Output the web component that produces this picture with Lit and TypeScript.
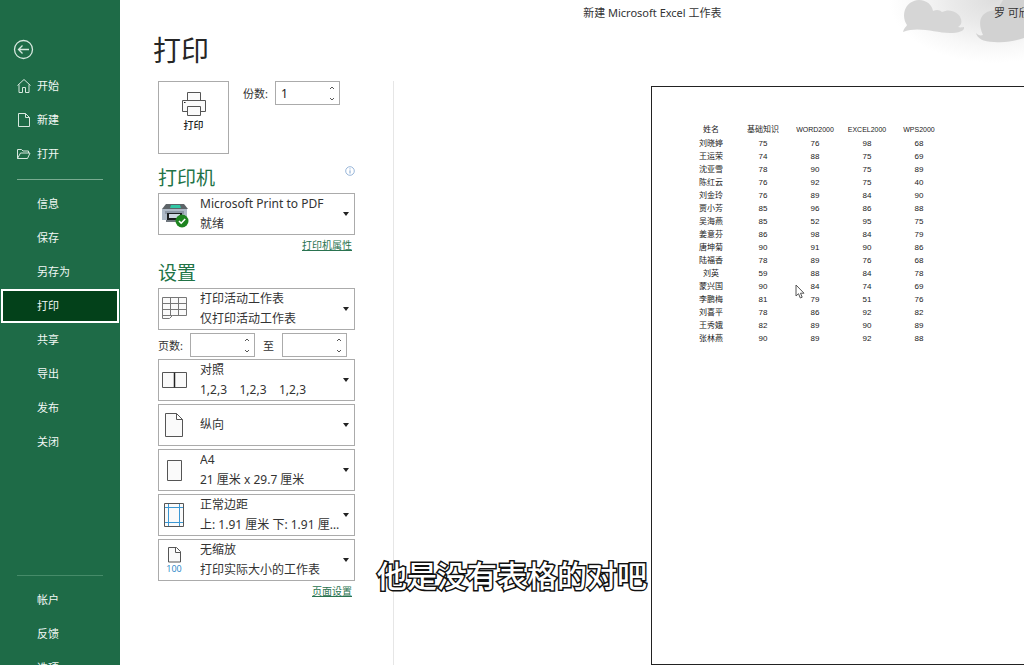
import { LitElement, html, css, svg } from "lit";
import { customElement, property } from "lit/decorators.js";

const homeIcon = svg`<svg viewBox="0 0 16 16" width="16" height="16"><path d="M1.5 7.5 8 1.5l6.500 6M3 6.500V14.500h3.500V9.500h3v5H13V6.500"/></svg>`;
const newIcon = svg`<svg viewBox="0 0 16 16" width="16" height="16"><path d="M2.500 1.500h7L13.500 5.500V14.500H2.500zM9.500 1.500v4h4"/></svg>`;
const openIcon = svg`<svg viewBox="0 0 16 16" width="16" height="16"><path d="M1.500 12.500v-9h4l1.500 1.500h5.500v2M1.500 12.500l3-5.500h9.500l-2.500 5.500z"/></svg>`;

const printerIcon = svg`<svg viewBox="0 0 26 26" width="26" height="26" fill="#fafafa" stroke="#555"><path d="M6.500 9.500v-8h13v8"/><path d="M6.500 20.500h-5v-11h23v11h-5"/><path d="M6.500 15.500h13v9h-13z"/><path d="M3 11.500h1.500" stroke="#222"/></svg>`;
const deviceIcon = svg`<svg viewBox="0 0 30 28" width="30" height="28"><path d="M5 4h18l4 5H1z" fill="#5d6468"/><path d="M10 5h9l1 3H9z" fill="#31c6a4"/><path d="M1 9h25v11H1z" fill="#aeb9c6"/><path d="M4 11h19v3H4z" fill="#8d98a6"/><path d="M6 13h15v7H6z" fill="#1c1e20"/><path d="M8 14h11v4H8z" fill="#cfd8e2"/><path d="M5 20h16v2H5z" fill="#70777e"/><circle cx="21" cy="21" r="6.500" fill="#1e8420"/><path d="M18 21l2.200 2.200 4-4.200" fill="none" stroke="#fff" stroke-width="1.600"/></svg>`;
const sheetIcon = svg`<svg viewBox="0 0 30 28" width="30" height="28" fill="#fafafa" stroke="#777"><path d="M1.500 2.500h24v18h-14l-3 3h-7z"/><path d="M1.500 8.500h24M1.500 14.500h24M1.500 20.500h10M9.500 2.500v18M17.500 2.500v18" fill="none"/></svg>`;
const collateIcon = svg`<svg viewBox="0 0 30 28" width="30" height="28" fill="#fafafa" stroke="#555"><path d="M1.500 6.500h12v15h-12zM13.500 6.500h12v15h-12z"/><path d="M13.500 6.500v15" stroke="#222" stroke-width="1.500"/></svg>`;
const portraitIcon = svg`<svg viewBox="0 0 30 28" width="30" height="28" fill="#fafafa" stroke="#555"><path d="M4.500 2.500h11l6 6v17h-17zM15.500 2.500v6h6"/></svg>`;
const paperIcon = svg`<svg viewBox="0 0 30 28" width="30" height="28" fill="#fafafa" stroke="#555"><path d="M6.500 4.500h14v20h-14z"/></svg>`;
const marginIcon = svg`<svg viewBox="0 0 30 28" width="30" height="28" fill="#fafafa"><path d="M3.500 2.500h19v23h-19z" stroke="#555"/><path d="M7.500 3v22M18.500 3v22M4 6.500h18M4 21.500h18" stroke="#3b97d3"/></svg>`;
const scaleIcon = svg`<svg viewBox="0 0 30 28" width="30" height="28" fill="#fafafa" stroke="#555"><path d="M7.500 1.500h8l4 4v10.500h-12zM14.500 1.500v5h5"/><text x="13" y="26" text-anchor="middle" class="scale">100</text></svg>`;

/** Number box with its own pair of step buttons. */
@customElement("spin-box")
export class SpinBox extends LitElement {
  static styles = css`
    :host { display: inline-flex; align-items: center; }
    label { display: flex; align-items: center; font-size: 11px; color: #333; white-space: nowrap; }
    .label { width: var(--label-width, auto); }
    .box { box-sizing: border-box; display: flex; width: 65px; height: 24px; border: 1px solid #ababab; background: #fff; }
    input { flex: 1; min-width: 0; border: 0; padding: 0 0 0 5px; background: none; font: 12px "Noto Sans", "Noto Sans CJK SC", sans-serif; color: #222; outline: none; }
    .steps { display: flex; flex-direction: column; width: 14px; }
    button { flex: 1; display: flex; align-items: center; justify-content: center; border: 0; padding: 0; background: none; }
    svg { fill: none; stroke: #555; }
  `;
  @property() label = "";
  @property() value = "";
  render() {
    return html`
      <label for="value"><span class="label">${this.label}</span></label>
      <div class="box">
        <input id="value" inputmode="numeric" .value=${this.value} />
        <div class="steps">
          <button aria-label="增加"><svg width="6" height="4"><path d="M1 3l2-2 2 2" /></svg></button>
          <button aria-label="减少"><svg width="6" height="4"><path d="M1 1l2 2 2-2" /></svg></button>
        </div>
      </div>`;
  }
}

/** Drop-down showing an icon and up to two lines for the current choice. */
@customElement("choice-box")
export class ChoiceBox extends LitElement {
  static styles = css`
    :host { display: block; }
    .box { box-sizing: border-box; display: grid; border: 1px solid #ababab; height: 42px; background: #fff; }
    .face, select { grid-area: 1 / 1; min-width: 0; }
    .face { display: grid; grid-template-columns: 37px minmax(0, 1fr) 6px; align-items: center; padding: 0 5px 0 2px; column-gap: 2px; pointer-events: none; }
    .lines { min-width: 0; font-size: 12px; line-height: 20px; color: #333; }
    .line { white-space: pre; overflow: hidden; text-overflow: ellipsis; }
    select { opacity: 0; width: 100%; height: 100%; }
    .icon { display: flex; }
    .scale { font: 9px "Open Sans", sans-serif; fill: #1e84c6; stroke: none; }
  `;
  @property() label = "";
  @property({ attribute: false }) icon?: unknown;
  @property({ attribute: false }) lines: string[] = [];
  render() {
    return html`<div class="box">
      <select aria-label=${this.label}><option>${this.lines[0]}</option></select>
      <div class="face">
        <span class="icon">${this.icon}</span>
        <div class="lines">${this.lines.map((l) => html`<div class="line">${l}</div>`)}</div>
        <svg width="6" height="4"><path d="M0 0h6L3 4z" fill="#222" /></svg>
      </div>
    </div>`;
  }
}

@customElement("side-nav")
export class SideNav extends LitElement {
  static styles = css`
    :host { display: block; background: #1e6b47; }
    nav { box-sizing: border-box; height: 100%; display: flex; flex-direction: column; padding-top: 39px; }
    .back { align-self: flex-start; display: flex; margin: 0 0 9px 13px; padding: 0; border: 0; background: none; }
    svg { fill: none; stroke: #d7e8df; }
    a { box-sizing: border-box; height: 34px; flex: none; display: grid; grid-template-columns: 16px auto; justify-content: start; align-items: center; column-gap: 5px; padding-left: 16px; color: #f2f8f5; font-size: 11px; line-height: 16px; text-decoration: none; }
    .text { grid-column: 2; }
    .current { background: #03411a; border: 2px solid #fff; margin: 0 1px; padding-left: 13px; }
    hr { width: 86px; margin: 8px 0 7px 17px; border: 0; border-top: 1px solid #79ab91; flex: none; }
    .low { border-color: #468b69; margin-top: auto; }
    .tail { margin-bottom: -20px; }
  `;
  private link(text: string, icon?: unknown) {
    const current = text === "打印";
    return html`<a href="#" class=${current ? "current" : ""} aria-current=${current ? "page" : "false"}>${icon ?? ""}<span class="text">${text}</span></a>`;
  }
  render() {
    return html`<nav>
      <button class="back" aria-label="返回"><svg viewBox="0 0 21 21" width="21" height="21"><circle cx="10.500" cy="10.500" r="9" stroke-width="1.300" /><path d="M16 10.500H5.500M9.500 6.500l-4 4 4 4" stroke-width="1.300" /></svg></button>
      ${this.link("开始", homeIcon)}${this.link("新建", newIcon)}${this.link("打开", openIcon)}
      <hr />
      ${["信息", "保存", "另存为", "打印", "共享", "导出", "发布", "关闭"].map((t) => this.link(t))}
      <hr class="low" />
      <div class="tail">${["帐户", "反馈", "选项"].map((t) => this.link(t))}</div>
    </nav>`;
  }
}

@customElement("print-settings")
export class PrintSettings extends LitElement {
  static styles = css`
    :host { display: block; box-sizing: border-box; width: 274px; padding: 0 38px; border-right: 1px solid #e6e6e6; }
    .top { display: flex; align-items: flex-start; gap: 14px; }
    .print { box-sizing: border-box; width: 71px; height: 73px; display: flex; flex-direction: column; align-items: center; padding: 9px 0 0; border: 1px solid #ababab; background: #fff; font: 500 10px/16px "Noto Sans", "Noto Sans CJK SC", sans-serif; color: #222; }
    .copies { --label-width: 32px; }
    .head { display: flex; justify-content: space-between; align-items: flex-start; }
    .info { padding-top: 1px; }
    h2 { margin: 0; font-size: 19px; line-height: 26px; font-weight: 400; color: #217346; }
    .printer { padding-top: 11px; margin-bottom: 2px; }
    .setup { padding-top: 7px; margin-bottom: 2px; }
    .more { text-align: right; padding: 2px 3px 0 0; font-size: 10px; line-height: 16px; }
    a { color: #2a7350; text-underline-offset: 1px; }
    .stack { display: flex; flex-direction: column; gap: 3px; }
    .range { display: flex; justify-content: space-between; padding-right: 8px; margin-bottom: -1px; }
    .from { --label-width: 32px; }
    .to { --label-width: 19px; }
  `;
  render() {
    return html`
      <div class="top">
        <button class="print">${printerIcon}<span>打印</span></button>
        <spin-box class="copies" label="份数:" value="1"></spin-box>
      </div>
      <div class="head printer">
        <h2>打印机</h2>
        <svg class="info" width="10" height="10" viewBox="0 0 10 10" fill="none" stroke="#7fa3cf"><circle cx="5" cy="5" r="4.300" stroke-width=".8" /><path d="M5 4.300v3.200M5 2.400v1" /></svg>
      </div>
      <choice-box label="打印机" .icon=${deviceIcon} .lines=${["Microsoft Print to PDF", "就绪"]}></choice-box>
      <div class="more"><a href="#">打印机属性</a></div>
      <div class="head setup"><h2>设置</h2></div>
      <div class="stack">
        <choice-box label="打印范围" .icon=${sheetIcon} .lines=${["打印活动工作表", "仅打印活动工作表"]}></choice-box>
        <div class="range">
          <spin-box class="from" label="页数:"></spin-box>
          <spin-box class="to" label="至"></spin-box>
        </div>
        <choice-box label="对照" .icon=${collateIcon} .lines=${["对照", "1,2,3    1,2,3    1,2,3"]}></choice-box>
        <choice-box label="方向" .icon=${portraitIcon} .lines=${["纵向"]}></choice-box>
        <choice-box label="纸张" .icon=${paperIcon} .lines=${["A4", "21 厘米 x 29.7 厘米"]}></choice-box>
        <choice-box label="边距" .icon=${marginIcon} .lines=${["正常边距", "上: 1.91 厘米 下: 1.91 厘米"]}></choice-box>
        <choice-box label="缩放" .icon=${scaleIcon} .lines=${["无缩放", "打印实际大小的工作表"]}></choice-box>
      </div>
      <div class="more"><a href="#">页面设置</a></div>`;
  }
}

const columns = ["姓名", "基础知识", "WORD2000", "EXCEL2000", "WPS2000"];
const rows: [string, number, number, number, number][] = [
  ["刘晓婷", 75, 76, 98, 68],
  ["王运荣", 74, 88, 75, 69],
  ["沈亚雪", 78, 90, 75, 89],
  ["陈红云", 76, 92, 75, 40],
  ["刘金玲", 76, 89, 84, 90],
  ["贾小芳", 85, 96, 86, 88],
  ["吴海燕", 85, 52, 95, 75],
  ["姜意芬", 86, 98, 84, 79],
  ["唐坤菊", 90, 91, 90, 86],
  ["陆福香", 78, 89, 76, 68],
  ["刘英", 59, 88, 84, 78],
  ["蒙兴国", 90, 84, 74, 69],
  ["李鹏梅", 81, 79, 51, 76],
  ["刘喜平", 78, 86, 92, 82],
  ["王秀娥", 82, 89, 90, 89],
  ["张林燕", 90, 89, 92, 88],
];

@customElement("sheet-preview")
export class SheetPreview extends LitElement {
  static styles = css`
    :host { display: flex; min-width: 0; overflow: hidden; padding: 5px 0 0 257px; }
    .page { box-sizing: border-box; flex: none; width: 410px; border: 1px solid #222; padding: 36px 33px; background: #fff; }
    table { width: 260px; table-layout: fixed; border-collapse: collapse; font-family: "Liberation Sans", "Noto Sans CJK SC", sans-serif; font-size: 8px; line-height: 13px; color: #222; text-align: center; }
    th, td { padding: 0; font-weight: 400; white-space: nowrap; }
    th { padding-bottom: 1px; }
    .latin { font-size: 7px; }
  `;
  render() {
    return html`<div class="page"><table>
      <thead><tr>${columns.map((c) => html`<th scope="col" class=${/^\w+$/.test(c) ? "latin" : ""}>${c}</th>`)}</tr></thead>
      <tbody>${rows.map((r) => html`<tr>${r.map((v) => html`<td>${v}</td>`)}</tr>`)}</tbody>
    </table></div>`;
  }
}

@customElement("app-root")
export class AppRoot extends LitElement {
  static styles = css`
    :host { position: relative; display: grid; grid-template-columns: 120px minmax(0, 1fr); height: 100vh; overflow: hidden; background: #fff; font-family: "Noto Sans", "Noto Sans CJK SC", sans-serif; color: #333; }
    main { display: flex; flex-direction: column; min-width: 0; min-height: 0; }
    .bar { position: relative; display: grid; grid-template-columns: 17fr auto 10fr 30px; align-items: center; height: 26px; font-size: 11px; line-height: 16px; white-space: nowrap; }
    .title { grid-column: 2; }
    .user { grid-column: 4; z-index: 1; }
    .art { position: absolute; top: 0; right: 0; }
    h1 { margin: 0 0 0 33px; font-size: 28px; line-height: 40px; padding: 4px 0 11px; font-weight: 400; color: #262626; }
    .body { flex: 1; min-height: 0; display: grid; grid-template-columns: auto minmax(0, 1fr); }
    .caption { position: absolute; left: 0; right: 0; bottom: 67px; margin: 0; text-align: center; font-size: 30px; line-height: 44px; font-weight: 500; color: #fff; -webkit-text-stroke: 3px #111; paint-order: stroke fill; pointer-events: none; }
    .pointer { position: absolute; left: 795px; top: 284px; }
  `;
  render() {
    return html`
      <side-nav></side-nav>
      <main>
        <div class="bar">
          <svg class="art" width="150" height="70" viewBox="0 0 150 70">
            <defs><radialGradient id="haze" gradientUnits="userSpaceOnUse" cx="120" cy="0" r="105" gradientTransform="scale(1 .6)"><stop offset="0" stop-color="#dedede" /><stop offset=".4" stop-color="#eaeaea" /><stop offset=".75" stop-color="#f8f8f8" /><stop offset="1" stop-color="#fff" /></radialGradient></defs>
            <path d="M0 0h150v70H0z" fill="url(#haze)" />
            <path d="M29 32c1-4 3-5 4-7-6-9-3-24 12-25 8 0 13 5 14 11 4-2 7-1 9 1 8-4 17 0 19 7 1 4 0 6-3 8 3 1 5 0 6 0 1 4-6 6-14 6-15 0-31-7-47-1z" fill="#d6d6d6" />
            <path d="M102 33c2 2 4 3 7 2-5-11-4-21 7-24 6-1 9-2 10-6l3-5h21v38c-10 3-18 5-30 4-11 0-17-4-18-9z" fill="#d2d2d2" />
          </svg>
          <span class="title">新建 Microsoft Excel 工作表</span>
          <span class="user">罗 可欣</span>
        </div>
        <h1>打印</h1>
        <div class="body"><print-settings></print-settings><sheet-preview></sheet-preview></div>
      </main>
      <svg class="pointer" width="10" height="15" viewBox="0 0 10 15"><path d="M1 1v11l2.500-2.300L5.300 14l1.900-.8-1.700-4H9z" fill="#fff" stroke="#555" /></svg>
      <p class="caption">他是没有表格的对吧</p>`;
  }
}
